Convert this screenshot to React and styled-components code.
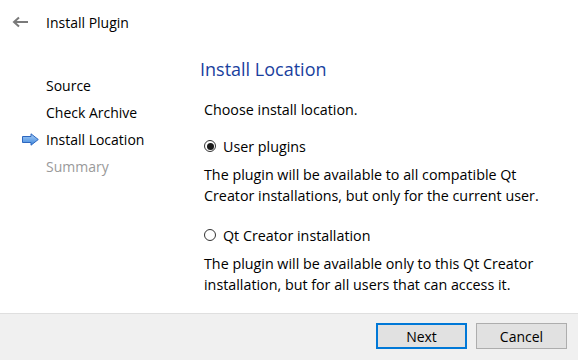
import React from 'react';
import styled, { createGlobalStyle } from 'styled-components';

const GlobalStyle = createGlobalStyle`
  html, body {
    margin: 0;
    padding: 0;
    background: #ffffff;
  }
  body {
    font-family: "Open Sans", "Noto Sans", sans-serif;
    color: #000;
  }
`;

const Window = styled.div`
  width: 578px;
  height: 360px;
  display: flex;
  flex-direction: column;
  background: #ffffff;
  overflow: hidden;
`;

const Header = styled.div`
  height: 44px;
  display: flex;
  align-items: center;
  padding-left: 12px;
  gap: 18px;
  font-size: 14px;
`;

const BackButton = styled.span`
  display: flex;
  width: 16px;
  height: 12px;
`;

const Body = styled.div`
  flex: 1;
  display: flex;
`;

const Steps = styled.ul`
  list-style: none;
  margin: 0;
  padding: 28px 0 0 0;
  width: 200px;
`;

const Step = styled.li`
  height: 27px;
  display: flex;
  align-items: center;
  font-size: 14px;
  color: ${props => (props.pending ? '#9a9a9a' : '#000')};
`;

const StepMarker = styled.span`
  width: 46px;
  display: flex;
  justify-content: flex-start;
  padding-left: 22px;
  box-sizing: border-box;
`;

const Content = styled.div`
  flex: 1;
  display: flex;
  flex-direction: column;
`;

const Title = styled.h2`
  margin: 13px 0 0 0;
  font-size: 18px;
  font-weight: 400;
  line-height: 24px;
  color: #1a3f9e;
`;

const Section = styled.div`
  padding-left: 4px;
  display: flex;
  flex-direction: column;
  font-size: 14.3px;
`;

const Prompt = styled.p`
  margin: 19px 0 0 0;
  line-height: 20px;
`;

const RadioRow = styled.label`
  display: flex;
  align-items: center;
  gap: 7px;
  height: 20px;
  margin-top: ${props => props.gap}px;
`;

const RadioCircle = styled.span`
  width: 12px;
  height: 12px;
  border-radius: 50%;
  border: 1px solid #333;
  box-sizing: border-box;
  display: flex;
  align-items: center;
  justify-content: center;
  background: #fff;

  &::after {
    content: '';
    display: ${props => (props.checked ? 'block' : 'none')};
    width: 7px;
    height: 7px;
    border-radius: 50%;
    background: #1b1b1b;
  }
`;

const Description = styled.p`
  margin: 8px 0 0 0;
  line-height: 21px;
  width: 345px;
`;

const Footer = styled.div`
  height: 47px;
  border-top: 1px solid #dfdfdf;
  background: #f0f0f0;
  display: flex;
  justify-content: flex-end;
  align-items: flex-start;
  gap: 9px;
  padding: 9px 11px 0 0;
  box-sizing: border-box;
`;

const Button = styled.button`
  width: 91px;
  height: 26px;
  box-sizing: border-box;
  background: #e1e1e1;
  border: ${props => (props.primary ? '2px solid #0078d7' : '1px solid #adadad')};
  font-family: "Open Sans", "Noto Sans", sans-serif;
  font-size: 14px;
  color: #000;
  padding: 0;
`;

function BackArrow() {
  return (
    <svg width="16" height="12" viewBox="0 0 16 12">
      <path d="M16 6H2.5M7 1.5L2 6l5 4.5" fill="none" stroke="#7a7a7a" strokeWidth="2" />
    </svg>
  );
}

function CurrentArrow() {
  return (
    <svg width="17" height="13" viewBox="0 0 17 13">
      <defs>
        <linearGradient id="arrowFill" x1="0" y1="0" x2="0" y2="1">
          <stop offset="0" stopColor="#a9cff7" />
          <stop offset="1" stopColor="#3d86dc" />
        </linearGradient>
      </defs>
      <path
        d="M0.5 3.5H9V0.8L16.3 6.5L9 12.2V9.5H0.5Z"
        fill="url(#arrowFill)"
        stroke="#2d67bf"
        strokeWidth="1"
        strokeLinejoin="round"
      />
    </svg>
  );
}

const steps = [
  { label: 'Source' },
  { label: 'Check Archive' },
  { label: 'Install Location', current: true },
  { label: 'Summary', pending: true },
];

export default function App() {
  return (
    <>
      <GlobalStyle />
      <Window>
        <Header>
          <BackButton>
            <BackArrow />
          </BackButton>
          <span>Install Plugin</span>
        </Header>
        <Body>
          <Steps>
            {steps.map(step => (
              <Step key={step.label} pending={step.pending}>
                <StepMarker>{step.current && <CurrentArrow />}</StepMarker>
                {step.label}
              </Step>
            ))}
          </Steps>
          <Content>
            <Title>Install Location</Title>
            <Section>
              <Prompt>Choose install location.</Prompt>
              <RadioRow gap={16}>
                <RadioCircle checked />
                User plugins
              </RadioRow>
              <Description>
                The plugin will be available to all compatible Qt Creator installations, but only for the current user.
              </Description>
              <RadioRow gap={19}>
                <RadioCircle />
                Qt Creator installation
              </RadioRow>
              <Description>
                The plugin will be available only to this Qt Creator installation, but for all users that can access it.
              </Description>
            </Section>
          </Content>
        </Body>
        <Footer>
          <Button primary>Next</Button>
          <Button>Cancel</Button>
        </Footer>
      </Window>
    </>
  );
}
